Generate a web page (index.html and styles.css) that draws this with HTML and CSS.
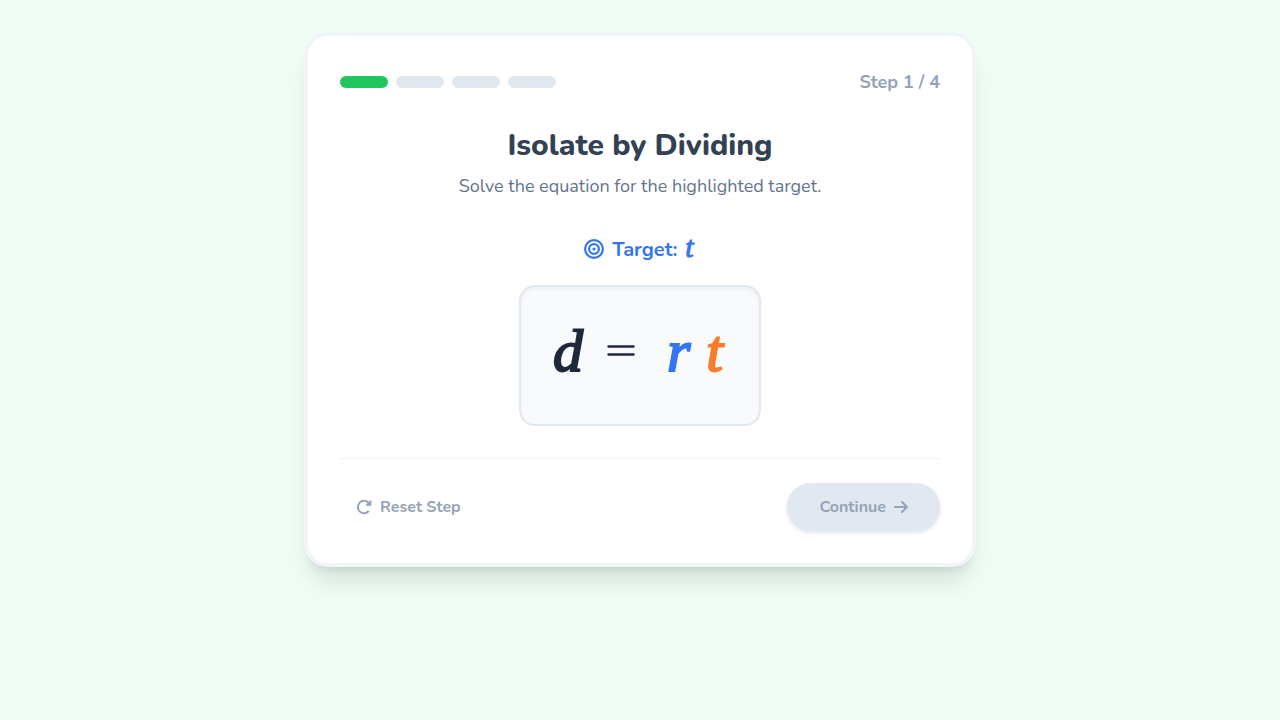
FILE: index.html
```html
<!DOCTYPE html>
<html lang="en">
<head>
<meta charset="utf-8">
<meta name="viewport" content="width=device-width, initial-scale=1">
<title>Isolate by Dividing</title>
<link rel="stylesheet" href="styles.css">
</head>
<body>
<main class="card">
  <header class="top">
    <div class="steps">
      <span class="step step-active"></span>
      <span class="step"></span>
      <span class="step"></span>
      <span class="step"></span>
    </div>
    <span class="counter">Step 1 / 4</span>
  </header>
  <h1 class="title">Isolate by Dividing</h1>
  <p class="subtitle">Solve the equation for the highlighted target.</p>
  <div class="target">
    <svg class="target-icon" viewBox="0 0 20 20" fill="none" stroke="currentColor" aria-hidden="true">
      <circle cx="10" cy="10" r="8.9" stroke-width="2.2"/>
      <circle cx="10" cy="10" r="4.9" stroke-width="2.2"/>
      <circle cx="10" cy="10" r="1.6" fill="currentColor" stroke="none"/>
    </svg>
    <span>Target:</span>
    <span class="math target-var">t</span>
  </div>
  <div class="equation">
    <span class="math">d</span>
    <svg class="equals" viewBox="0 0 28 12" role="img" aria-label="equals"><path d="M1.5 1.5H26.5M1.5 9.5H26.5" stroke="currentColor" stroke-width="2.4" stroke-linecap="round"/></svg>
    <span class="product"><button class="math term term-r" type="button">r</button><button class="math term term-t" type="button">t</button></span>
  </div>
  <footer class="bottom">
    <button class="button reset" type="button">
      <svg class="icon" viewBox="0 0 16 16" fill="none" stroke="currentColor" stroke-width="2" stroke-linecap="round" aria-hidden="true"><path d="M12.3 12.6A6.2 6.2 0 1 1 12.4 3.6L13.4 4.6"/><path d="M14.9 1.8V6.2H10.4Z" fill="currentColor" stroke-width="1" stroke-linejoin="round"/></svg>
      Reset Step
    </button>
    <button class="button continue" type="button" disabled>
      Continue
      <svg class="arrow" viewBox="0 0 14 14" fill="none" stroke="currentColor" stroke-width="2" stroke-linecap="round" stroke-linejoin="round" aria-hidden="true"><path d="M1 7H13M8 2L13 7L8 12"/></svg>
    </button>
  </footer>
</main>
</body>
</html>
```
FILE: styles.css
```css
* { box-sizing: border-box; }
body {
  margin: 0;
  min-height: 100vh;
  padding: 32px 16px;
  background: #f0fdf4;
  color: #1e293b;
  font-family: Nunito, Lato, "Open Sans", sans-serif;
}
.card {
  max-width: 672px;
  margin: 0 auto;
  padding: 32px;
  background: #fff;
  border: 4px solid #f1f5f9;
  border-radius: 24px;
  box-shadow: 0 20px 25px -5px rgba(0, 0, 0, .1), 0 8px 10px -6px rgba(0, 0, 0, .1);
}
.top, .bottom { display: flex; align-items: center; justify-content: space-between; }
.top { margin-bottom: 32px; }
.steps { display: flex; gap: 8px; }
.step { width: 48px; height: 12px; border-radius: 6px; background: #e2e8f0; }
.step-active { background: #22c55e; }
.counter { font-size: 18px; line-height: 28px; font-weight: 700; color: #94a3b8; }
.title {
  margin: 0 0 8px;
  text-align: center;
  font-size: 30px;
  line-height: 36px;
  font-weight: 800;
  color: #334155;
}
.subtitle { margin: 0 0 32px; text-align: center; font-size: 18px; line-height: 28px; color: #64748b; }
.target {
  display: flex;
  align-items: center;
  justify-content: center;
  gap: 8px;
  height: 34px;
  margin-bottom: 19px;
  font-size: 20px;
  font-weight: 700;
  color: #3575f0;
}
.target-icon { width: 20px; height: 20px; }
.math {
  font-family: KaTeX_Math, "Liberation Serif", serif;
  font-style: italic;
  font-weight: 400;
  -webkit-text-stroke: 2px currentColor;
}
.target-var { padding: 0 2px 4px 0; font-size: 30px; line-height: 30px; -webkit-text-stroke-width: 1px; }
.equation {
  display: flex;
  align-items: center;
  justify-content: center;
  gap: 24px;
  width: fit-content;
  height: 141px;
  margin: 0 auto 32px;
  padding: 0 32px 10px;
  font-size: 60px;
  line-height: 72px;
  background: #f8fafc;
  border: 2px solid #e2e8f0;
  border-radius: 16px;
  box-shadow: inset 0 2px 4px rgba(0, 0, 0, .05);
}
.equals { width: 28px; height: 12px; }
.product { display: flex; gap: 16px; padding-left: 8px; }
.term { padding: 0; border: 0; background: none; font-size: 60px; line-height: 72px; cursor: pointer; }
.term-r { color: #3575f0; }
.term-t { padding-right: 4px; color: #fb7c28; }
.bottom { padding-top: 24px; border-top: 1px solid #f1f5f9; }
.button {
  display: flex;
  align-items: center;
  gap: 8px;
  border: 0;
  border-radius: 24px;
  font: inherit;
  font-size: 16px;
  line-height: 24px;
  font-weight: 700;
  color: #94a3b8;
}
.reset { padding: 8px 16px; background: none; cursor: pointer; }
.continue {
  padding: 12px 32px;
  background: #e2e8f0;
  box-shadow: 0 2px 4px rgba(0, 0, 0, .1);
}
.icon { width: 16px; height: 16px; }
.arrow { width: 14px; height: 14px; }
```
